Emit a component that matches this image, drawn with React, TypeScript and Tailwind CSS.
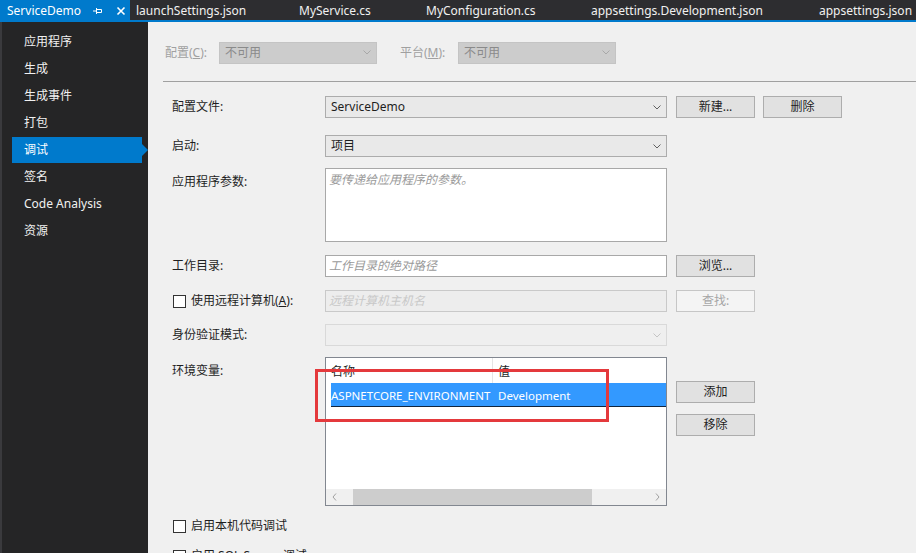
import React from 'react';

const FONT = "font-['Noto_Sans','Noto_Sans_CJK_SC',sans-serif]";

const SIDE_ITEMS = ['应用程序', '生成', '生成事件', '打包', '调试', '签名', 'Code Analysis', '资源'];

const TABS = [
  { label: 'launchSettings.json', w: 'w-[163px]' },
  { label: 'MyService.cs', w: 'w-[127px]' },
  { label: 'MyConfiguration.cs', w: 'w-[165px]' },
  { label: 'appsettings.Development.json', w: 'w-[228px]' },
  { label: 'appsettings.json', w: 'w-[110px]' },
];

const Chevron = ({ color = '#606060' }: { color?: string }) => (
  <svg width="8" height="5" viewBox="0 0 8 5" className="shrink-0">
    <path d="M0.5 0.5 L4 4 L7.5 0.5" fill="none" stroke={color} strokeWidth="1" />
  </svg>
);

const Select = ({ value, disabled = false, width = 'w-[342px]' }: { value: string; disabled?: boolean; width?: string }) => (
  <div
    className={`${width} h-[22px] flex items-center justify-between pl-[5px] pr-[5px] border ${
      disabled ? 'bg-[#cccccc] border-[#c4c4c4] text-[#8a8a8a]' : 'bg-[#e9e9e9] border-[#acacac] text-[#1e1e1e]'
    }`}
  >
    <span className="text-[12px]">{value}</span>
    <Chevron color={disabled ? '#a8a8a8' : '#606060'} />
  </div>
);

const Button = ({ label, disabled = false }: { label: string; disabled?: boolean }) => (
  <div
    className={`w-[79px] h-[22px] flex items-center justify-center text-[12px] border ${
      disabled ? 'bg-[#f4f4f4] border-[#c6c6c6] text-[#a6a6a6]' : 'bg-[#e1e1e1] border-[#adadad] text-[#1e1e1e]'
    }`}
  >
    {label}
  </div>
);

const Checkbox = () => <div className="w-[13px] h-[13px] border border-[#333333] bg-white shrink-0" />;

export default function App() {
  return (
    <div className={`${FONT} w-full h-screen overflow-hidden bg-[#f0f0f0] flex flex-col relative`}>
      {/* tab strip */}
      <div className="h-[20px] bg-[#2d2d30] flex items-stretch shrink-0 overflow-hidden text-[12px] text-[#f1f1f1] whitespace-nowrap">
        <div className="w-[130px] shrink-0 bg-[#007acc] flex items-center pl-[7px] pt-[2px] text-white">
          <span>ServiceDemo</span>
          <svg width="10" height="10" viewBox="0 0 10 10" className="ml-[12px]">
            <path d="M0 5 H3 M3.5 2 V8 M3.5 3.5 H8.5 V6.5 H3.5" fill="none" stroke="#ffffff" strokeWidth="1" />
          </svg>
          <svg width="10" height="10" viewBox="0 0 10 10" className="ml-[13px]">
            <path d="M1.5 1.5 L8.5 8.5 M8.5 1.5 L1.5 8.5" stroke="#ffffff" strokeWidth="1.6" />
          </svg>
        </div>
        {TABS.map((t) => (
          <div key={t.label} className={`${t.w} shrink-0 flex items-center pl-[6px] pt-[2px]`}>
            {t.label}
          </div>
        ))}
      </div>
      <div className="h-[2px] bg-[#007acc] shrink-0" />

      <div className="flex flex-1 min-h-0">
        {/* side nav */}
        <div className="w-[148px] shrink-0 bg-[#252526] border-l-2 border-[#3a3a3d] pt-[6px] text-[12px] text-[#f1f1f1]">
          {SIDE_ITEMS.map((item) => {
            const active = item === '调试';
            return (
              <div key={item} className="h-[27px] flex items-center relative">
                {active ? (
                  <div className="ml-[10px] w-[130px] h-[26px] bg-[#007acc] flex items-center pl-[12px] text-white relative">
                    {item}
                    <div className="absolute right-[-6px] top-[7px] w-0 h-0 border-y-[6px] border-y-transparent border-l-[6px] border-l-[#007acc]" />
                  </div>
                ) : (
                  <span className="pl-[22px]">{item}</span>
                )}
              </div>
            );
          })}
        </div>

        {/* property page */}
        <div className="flex-1 flex flex-col text-[12px] text-[#1e1e1e]">
          <div className="flex items-center pl-[17px] pt-[19px] h-[42px] shrink-0">
            <div className="w-[54px] text-[#a0a0a0]">
              配置(<span className="underline">C</span>):
            </div>
            <Select value="不可用" disabled width="w-[158px]" />
            <div className="w-[58px] ml-[23px] text-[#a0a0a0]">
              平台(<span className="underline">M</span>):
            </div>
            <Select value="不可用" disabled width="w-[158px]" />
          </div>

          <div className="mt-[17px] ml-[15px] h-px bg-[#a0a0a0] shrink-0" />

          <div className="pl-[24px] flex flex-col">
            <div className="mt-[14px] flex items-center h-[22px]">
              <div className="w-[153px]">配置文件:</div>
              <Select value="ServiceDemo" />
              <div className="ml-[9px]"><Button label="新建..." /></div>
              <div className="ml-[8px]"><Button label="删除" /></div>
            </div>

            <div className="mt-[17px] flex items-center h-[22px]">
              <div className="w-[153px]">启动:</div>
              <Select value="项目" />
            </div>

            <div className="mt-[11px] flex items-start">
              <div className="w-[153px] pt-[5px]">应用程序参数:</div>
              <div className="w-[342px] h-[74px] bg-white border border-[#a8a8a8] px-[3px] pt-[2px] italic text-[#9a9a9a]">
                要传递给应用程序的参数。
              </div>
            </div>

            <div className="mt-[13px] flex items-center h-[22px]">
              <div className="w-[153px]">工作目录:</div>
              <div className="w-[342px] h-[22px] bg-white border border-[#a8a8a8] px-[3px] flex items-center italic text-[#9a9a9a]">
                工作目录的绝对路径
              </div>
              <div className="ml-[9px]"><Button label="浏览..." /></div>
            </div>

            <div className="mt-[13px] flex items-center h-[22px]">
              <div className="w-[153px] flex items-center gap-[5px] pl-px">
                <Checkbox />
                <span>
                  使用远程计算机(<span className="underline">A</span>):
                </span>
              </div>
              <div className="w-[342px] h-[22px] bg-[#ededed] border border-[#c9c9c9] px-[3px] flex items-center italic text-[#c8c8c8]">
                远程计算机主机名
              </div>
              <div className="ml-[9px]"><Button label="查找:" disabled /></div>
            </div>

            <div className="mt-[12px] flex items-center h-[22px]">
              <div className="w-[153px]">身份验证模式:</div>
              <div className="w-[342px] h-[22px] bg-[#efefef] border border-[#d9d9d9] flex items-center justify-end pr-[5px]">
                <Chevron color="#c4c4c4" />
              </div>
            </div>

            <div className="mt-[11px] flex items-start">
              <div className="w-[153px] pt-[5px]">环境变量:</div>
              <div className="w-[342px] h-[149px] bg-white border border-[#828790] flex flex-col">
                <div className="h-[25px] flex shrink-0">
                  <div className="w-[167px] border-r border-[#e5e5e5] pl-[5px] flex items-center pt-[2px]">名称</div>
                  <div className="pl-[5px] flex items-center pt-[2px]">值</div>
                </div>
                <div className="ml-[5px] h-[24px] bg-[#3399ff] border-b border-[#10253f] flex items-center text-white shrink-0 text-[11.5px] whitespace-nowrap pt-[2px]">
                  <div className="w-[162px] overflow-hidden">ASPNETCORE_ENVIRONMENT</div>
                  <div className="pl-[5px]">Development</div>
                </div>
                <div className="flex-1" />
                <div className="h-[16px] bg-[#f0f0f0] flex items-center shrink-0 text-[#a0a0a0]">
                  <div className="w-[17px] flex justify-center">
                    <svg width="5" height="8" viewBox="0 0 5 8"><path d="M4 0.5 L1 4 L4 7.5" fill="none" stroke="#a0a0a0" strokeWidth="1" /></svg>
                  </div>
                  <div className="ml-[10px] w-[239px] h-full bg-[#cdcdcd]" />
                  <div className="flex-1" />
                  <div className="w-[17px] flex justify-center">
                    <svg width="5" height="8" viewBox="0 0 5 8"><path d="M1 0.5 L4 4 L1 7.5" fill="none" stroke="#a0a0a0" strokeWidth="1" /></svg>
                  </div>
                </div>
              </div>
              <div className="ml-[9px] flex flex-col">
                <div className="mt-[24px]"><Button label="添加" /></div>
                <div className="mt-[11px]"><Button label="移除" /></div>
              </div>
            </div>

            <div className="mt-[10px] flex items-center gap-[5px] h-[20px] pl-px">
              <Checkbox />
              <span>启用本机代码调试</span>
            </div>
            <div className="mt-[10px] flex items-center gap-[5px] h-[20px] pl-px">
              <Checkbox />
              <span>启用 SQL Server 调试</span>
            </div>
          </div>
        </div>
      </div>

      {/* red annotation box */}
      <div className="absolute left-[315px] top-[369px] w-[294px] h-[53px] border-[3px] border-[#e4393c]" />
    </div>
  );
}
